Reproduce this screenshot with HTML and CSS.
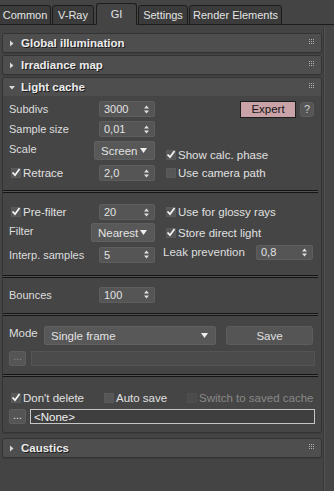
FILE: index.html
```html
<!DOCTYPE html>
<html lang="en">
<head>
  <meta charset="UTF-8">
  <title>Render Setup - GI</title>
  <link rel="stylesheet" href="styles.css">
</head>
<body>
  <div class="tabs">
    <div class="tab w-common">Common</div>
    <div class="tab w-vray">V-Ray</div>
    <div class="tab active w-gi">GI</div>
    <div class="tab w-settings">Settings</div>
    <div class="tab w-elements">Render Elements</div>
  </div>

  <div class="content">
    <div class="rollouts">
      <div class="rollout">
        <div class="rollout-head">
          <svg class="tri" width="6" height="7" viewBox="0 0 6 7"><polygon points="1,0.5 4.5,3.5 1,6.5" /></svg>
          <span class="title">Global illumination</span>
          <svg class="grip" width="6" height="6" viewBox="0 0 6 6"><path d="M0 0h1v1H0zM2 0h1v1H2zM4 0h1v1H4zM0 2h1v1H0zM2 2h1v1H2zM4 2h1v1H4zM0 4h1v1H0zM2 4h1v1H2zM4 4h1v1H4z" /></svg>
        </div>
      </div>

      <div class="rollout">
        <div class="rollout-head">
          <svg class="tri" width="6" height="7" viewBox="0 0 6 7"><polygon points="1,0.5 4.5,3.5 1,6.5" /></svg>
          <span class="title">Irradiance map</span>
          <svg class="grip" width="6" height="6" viewBox="0 0 6 6"><path d="M0 0h1v1H0zM2 0h1v1H2zM4 0h1v1H4zM0 2h1v1H0zM2 2h1v1H2zM4 2h1v1H4zM0 4h1v1H0zM2 4h1v1H2zM4 4h1v1H4z" /></svg>
        </div>
      </div>

      <div class="rollout open">
        <div class="rollout-head">
          <svg class="tri" width="6" height="7" viewBox="0 0 6 7"><polygon points="0,2 6,2 3,5.5" /></svg>
          <span class="title">Light cache</span>
          <svg class="grip" width="6" height="6" viewBox="0 0 6 6"><path d="M0 0h1v1H0zM2 0h1v1H2zM4 0h1v1H4zM0 2h1v1H0zM2 2h1v1H2zM4 2h1v1H4zM0 4h1v1H0zM2 4h1v1H2zM4 4h1v1H4z" /></svg>
        </div>

        <!-- main parameters -->
        <div class="sect grid grid-1">
          <div class="lbl">Subdivs</div>
          <div class="spin"><span>3000</span><svg class="arr" width="5" height="9" viewBox="0 0 5 9"><polygon points="0,3.5 2.5,0.5 5,3.5" /><polygon points="0,5.5 5,5.5 2.5,8.5" /></svg></div>
          <div class="btns">
            <div class="btn expert">Expert</div>
            <div class="btn help">?</div>
          </div>

          <div class="lbl">Sample size</div>
          <div class="spin"><span>0,01</span><svg class="arr" width="5" height="9" viewBox="0 0 5 9"><polygon points="0,3.5 2.5,0.5 5,3.5" /><polygon points="0,5.5 5,5.5 2.5,8.5" /></svg></div>
          <div></div>

          <div class="lbl lbl-up">Scale</div>
          <div class="drop drop-scale"><span>Screen</span><svg width="7" height="5" viewBox="0 0 7 5"><polygon points="0,0 7,0 3.5,5" /></svg></div>
          <label class="chk chk-low"><span class="box"><svg width="10" height="9" viewBox="0 0 10 9"><path d="M1.5 4.5 L4 7.2 L8.5 1" /></svg></span>Show calc. phase</label>

          <label class="chk chk-in"><span class="box"><svg width="10" height="9" viewBox="0 0 10 9"><path d="M1.5 4.5 L4 7.2 L8.5 1" /></svg></span>Retrace</label>
          <div class="spin"><span>2,0</span><svg class="arr" width="5" height="9" viewBox="0 0 5 9"><polygon points="0,3.5 2.5,0.5 5,3.5" /><polygon points="0,5.5 5,5.5 2.5,8.5" /></svg></div>
          <label class="chk"><span class="box"></span>Use camera path</label>
        </div>

        <div class="sep"></div>

        <!-- filtering -->
        <div class="sect grid grid-2">
          <label class="chk chk-in"><span class="box"><svg width="10" height="9" viewBox="0 0 10 9"><path d="M1.5 4.5 L4 7.2 L8.5 1" /></svg></span>Pre-filter</label>
          <div class="spin"><span>20</span><svg class="arr" width="5" height="9" viewBox="0 0 5 9"><polygon points="0,3.5 2.5,0.5 5,3.5" /><polygon points="0,5.5 5,5.5 2.5,8.5" /></svg></div>
          <label class="chk"><span class="box"><svg width="10" height="9" viewBox="0 0 10 9"><path d="M1.5 4.5 L4 7.2 L8.5 1" /></svg></span>Use for glossy rays</label>

          <div class="lbl lbl-up">Filter</div>
          <div class="drop drop-filter"><span>Nearest</span><svg width="7" height="5" viewBox="0 0 7 5"><polygon points="0,0 7,0 3.5,5" /></svg></div>
          <label class="chk"><span class="box"><svg width="10" height="9" viewBox="0 0 10 9"><path d="M1.5 4.5 L4 7.2 L8.5 1" /></svg></span>Store direct light</label>

          <div class="lbl">Interp. samples</div>
          <div class="spin"><span>5</span><svg class="arr" width="5" height="9" viewBox="0 0 5 9"><polygon points="0,3.5 2.5,0.5 5,3.5" /><polygon points="0,5.5 5,5.5 2.5,8.5" /></svg></div>
          <div class="leak">
            <span class="leak-lbl">Leak prevention</span>
            <div class="spin spin-leak"><span>0,8</span><svg class="arr" width="5" height="9" viewBox="0 0 5 9"><polygon points="0,3.5 2.5,0.5 5,3.5" /><polygon points="0,5.5 5,5.5 2.5,8.5" /></svg></div>
          </div>
        </div>

        <div class="sep"></div>

        <div class="sect grid grid-3">
          <div class="lbl">Bounces</div>
          <div class="spin"><span>100</span><svg class="arr" width="5" height="9" viewBox="0 0 5 9"><polygon points="0,3.5 2.5,0.5 5,3.5" /><polygon points="0,5.5 5,5.5 2.5,8.5" /></svg></div>
          <div></div>
        </div>

        <div class="sep"></div>

        <!-- mode / file -->
        <div class="sect sect-4">
          <div class="row row-mode">
            <div class="lbl mode-lbl">Mode</div>
            <div class="drop drop-mode"><span>Single frame</span><svg width="7" height="5" viewBox="0 0 7 5"><polygon points="0,0 7,0 3.5,5" /></svg></div>
            <div class="btn save">Save</div>
          </div>
          <div class="row row-file">
            <div class="btn dots off">...</div>
            <div class="field off"></div>
          </div>
        </div>

        <div class="sep"></div>

        <div class="sect sect-5">
          <div class="row row-opts">
            <label class="chk chk-in opt-a"><span class="box"><svg width="10" height="9" viewBox="0 0 10 9"><path d="M1.5 4.5 L4 7.2 L8.5 1" /></svg></span>Don't delete</label>
            <label class="chk opt-b"><span class="box"></span>Auto save</label>
            <label class="chk off"><span class="box"></span>Switch to saved cache</label>
          </div>
          <div class="row row-saved">
            <div class="btn dots">...</div>
            <div class="field sel">&lt;None&gt;</div>
          </div>
        </div>
      </div>

      <div class="rollout">
        <div class="rollout-head">
          <svg class="tri" width="6" height="7" viewBox="0 0 6 7"><polygon points="1,0.5 4.5,3.5 1,6.5" /></svg>
          <span class="title">Caustics</span>
          <svg class="grip" width="6" height="6" viewBox="0 0 6 6"><path d="M0 0h1v1H0zM2 0h1v1H2zM4 0h1v1H4zM0 2h1v1H0zM2 2h1v1H2zM4 2h1v1H4zM0 4h1v1H0zM2 4h1v1H2zM4 4h1v1H4z" /></svg>
        </div>
      </div>
    </div>
    <div class="scroll"></div>
  </div>
</body>
</html>
```

FILE: styles.css
```css
* {
  margin: 0;
  padding: 0;
  box-sizing: border-box;
}

body {
  width: 334px;
  height: 491px;
  overflow: hidden;
  background: #444444;
  font-family: "Liberation Sans", Arial, sans-serif;
  font-size: 11px;
  color: #dedede;
  display: flex;
  flex-direction: column;
}

/* tab strip */
.tabs {
  display: flex;
  align-items: flex-end;
  height: 25px;
  border-bottom: 1px solid #1c1c1c;
  gap: 1px;
}

.tab {
  height: 20px;
  margin-bottom: -1px;
  background: #3b3b3b;
  border: 1px solid #1c1c1c;
  border-radius: 3px 3px 0 0;
  display: flex;
  align-items: center;
  justify-content: center;
  color: #e4e4e4;
  font-size: 11px;
}

.tab.active {
  height: 22px;
  background: #444444;
  border-bottom-color: #444444;
  margin-left: 1px;
}

.w-common { width: 51px; border-left: none; border-radius: 0 3px 0 0; }
.w-vray { width: 42px; }
.w-gi { width: 41px; }
.w-settings { width: 50px; }
.w-elements { width: 93px; }

.content {
  flex: 1;
  display: flex;
}

.rollouts {
  width: 323px;
  padding: 8px 0 0 2px;
}

.scroll {
  flex: 1;
  margin-top: 2px;
  background: #464646;
  border-left: 1px solid #393939;
  box-shadow: inset 1px 0 0 #525252;
}

/* rollouts */
.rollout {
  width: 320px;
  margin-bottom: 2px;
  background: #454545;
  border: 1px solid #333333;
  border-radius: 3px;
  box-shadow: 0 1px 0 #3c3c3c;
}

.rollout.open {
  margin-bottom: 5px;
}

.rollout-head {
  height: 18px;
  background: #4e4e4e;
  border-radius: 2px;
  display: flex;
  align-items: center;
  padding: 0 6px 0 6px;
}

.tri {
  fill: #d8d8d8;
  margin-right: 6px;
}

.title {
  flex: 1;
  font-weight: bold;
  font-size: 11.5px;
  color: #ececec;
  text-shadow: 1px 1px 0 #1e1e1e;
}

.grip {
  fill: #b0b0b0;
  margin-top: -2px;
}

/* sections inside the light cache rollout */
.sect {
  padding-left: 6px;
  padding-right: 7px;
}

.grid {
  display: grid;
  grid-template-columns: 90px 56px 1fr;
  align-items: center;
}

.grid-1 {
  grid-template-rows: 20px 20px 23px 22px;
  padding-top: 3px;
  padding-bottom: 6px;
}

.grid-2 {
  grid-template-rows: 16px 21px 19px;
  row-gap: 2px;
  padding-top: 11px;
  padding-bottom: 11px;
}

.grid-3 {
  grid-template-rows: 15px;
  padding-top: 9px;
  padding-bottom: 11px;
}

.sep {
  height: 3px;
  margin-right: 3px;
  border-top: 1px solid #141414;
  border-bottom: 1px solid #141414;
  background: #525252;
}

.lbl {
  color: #dedede;
  white-space: nowrap;
}

.lbl-up {
  margin-top: -4px;
}

/* spinners */
.spin {
  height: 16px;
  background: #555555;
  border: 1px solid #5e5e5e;
  border-radius: 2px;
  display: flex;
  align-items: center;
  justify-content: space-between;
  padding: 0 5px 0 4px;
  color: #e2e2e2;
}

.arr {
  fill: #e0e0e0;
}

.spin-leak {
  width: 57px;
  height: 15px;
}

/* dropdowns */
.drop {
  height: 19px;
  background: #585858;
  border: 1px solid #606060;
  border-radius: 2px;
  display: flex;
  align-items: center;
  justify-content: space-between;
  padding: 0 7px 0 6px;
  color: #e2e2e2;
  font-size: 11.5px;
}

.drop svg {
  fill: #eeeeee;
}

.drop-scale {
  width: 61px;
  justify-self: end;
}

.drop-filter {
  width: 64px;
  justify-self: end;
}

.drop-mode {
  width: 172px;
}

/* checkboxes */
.chk {
  display: flex;
  align-items: center;
  gap: 2px;
  height: 14px;
  margin-left: 3px;
  white-space: nowrap;
  color: #e0e0e0;
  font-size: 11.5px;
}

.grid .chk {
  margin-left: 11px;
}

.grid .chk-in,
.chk-in {
  margin-left: 2px;
}

.chk-low {
  align-self: end;
}

.box {
  width: 10px;
  height: 10px;
  background: #565656;
  border: 1px solid #5a5a5a;
  position: relative;
}

.box svg {
  position: absolute;
  left: -1px;
  top: -1px;
  fill: none;
  stroke: #f4f4f4;
  stroke-width: 1.8;
}

.chk.off {
  color: #888888;
}

.chk.off .box {
  background: #4b4b4b;
  border-color: #4e4e4e;
}

/* buttons */
.btns {
  display: flex;
  justify-content: flex-end;
  align-items: center;
  gap: 4px;
}

.btn {
  display: flex;
  align-items: center;
  justify-content: center;
  border-radius: 3px;
  background: #555555;
  border: 1px solid #5d5d5d;
  color: #e0e0e0;
}

.expert {
  width: 56px;
  height: 17px;
  background: #c9a3a7;
  border: 1px solid #1d1d1d;
  border-radius: 0;
  color: #151515;
  font-size: 11.5px;
}

.help {
  width: 14px;
  height: 15px;
  color: #d0d0d0;
}

.leak {
  display: flex;
  align-items: center;
  margin-left: 8px;
  margin-top: -5px;
}

.leak-lbl {
  width: 93px;
  white-space: nowrap;
  font-size: 11.5px;
}

/* mode and file rows */
.row {
  display: flex;
  align-items: center;
}

.sect-4 {
  padding-top: 10px;
  padding-bottom: 9px;
}

.row-mode {
  height: 19px;
}

.mode-lbl {
  width: 35px;
  margin-top: -6px;
  font-size: 11.5px;
}

.save {
  width: 87px;
  height: 19px;
  margin-left: 10px;
  font-size: 11.5px;
}

.row-file {
  margin-top: 6px;
  gap: 5px;
  height: 14px;
}

.dots {
  width: 17px;
  height: 15px;
  border-radius: 2px;
  line-height: 1;
  padding-bottom: 3px;
}

.dots.off {
  color: #8c8c8c;
}

.field {
  flex: 1;
  height: 15px;
  margin-right: -1px;
  display: flex;
  align-items: center;
  padding-left: 3px;
}

.field.off {
  background: #4b4b4b;
  border: 1px solid #545454;
}

.field.sel {
  background: #3e3e3e;
  border: 1px solid #c6c6c6;
  color: #f2f2f2;
  font-size: 11.5px;
}

.sect-5 {
  padding-top: 14px;
  padding-bottom: 8px;
}

.row-opts {
  height: 14px;
}

.opt-a {
  width: 90px;
}

.opt-b {
  width: 80px;
}

.row-saved {
  margin-top: 4px;
  gap: 4px;
  height: 15px;
}
```
